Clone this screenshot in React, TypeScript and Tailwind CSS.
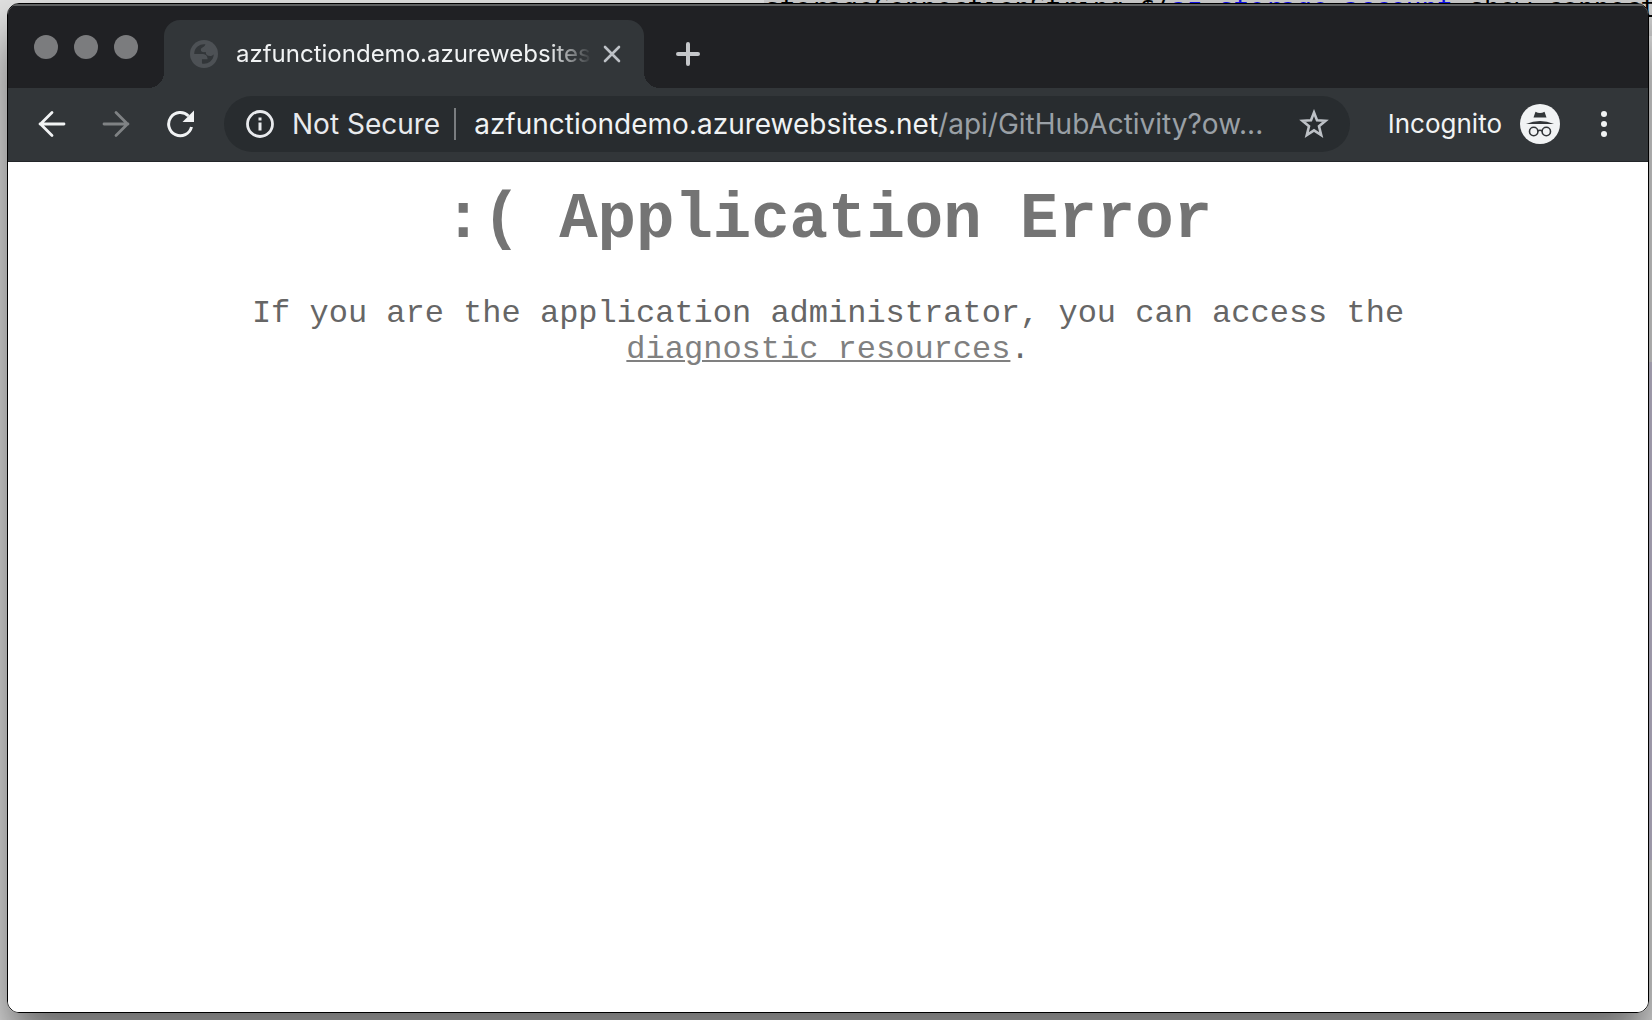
import React from "react";

const iconButton = "flex size-10 shrink-0 items-center justify-center rounded-full";

function Tab() {
  return (
    <div className="relative flex h-17 w-120 items-center rounded-t-2xl bg-[#323639] pr-3 pl-[26px]">
      <span className="absolute bottom-0 -left-4 size-4 bg-[radial-gradient(circle_at_0_0,transparent_16px,#323639_16px)]" />
      <span className="absolute -right-4 bottom-0 size-4 bg-[radial-gradient(circle_at_100%_0,transparent_16px,#323639_16px)]" />
      <svg viewBox="0 0 16 16" className="size-7 shrink-0" aria-hidden="true">
        <circle cx="8" cy="8" r="8" fill="#4d5155" />
        <path
          fill="#323639"
          d="M2.400 8H6.650C8.910 8 10.050 9 10.050 10.950H6.830V13.470A5.600 5.600 0 0 0 13.600 8.200C13.100 8.900 12.400 9.200 11.500 9.200C9.800 9.200 9 8.400 9 6.900C7 7.200 6.200 6.600 6.200 5.600C6.200 4.300 8.500 4.200 8.800 2.450A5.600 5.600 0 0 0 2.400 8z"
        />
      </svg>
      <span className="ml-[18px] min-w-0 flex-1 overflow-hidden mask-[linear-gradient(to_right,black_88%,transparent_100%)] text-2xl whitespace-nowrap text-[#f1f3f4]">
        azfunctiondemo.azurewebsites.net
      </span>
      <button aria-label="Close tab" className="flex size-10 items-center justify-center">
        <svg viewBox="0 0 18 18" className="size-[18px]" stroke="#bdc1c6" strokeWidth="2.600" strokeLinecap="round">
          <path d="M2 2 16 16M16 2 2 16" />
        </svg>
      </button>
    </div>
  );
}

function TitleBar() {
  return (
    <header className="flex h-[84px] items-end border-t-2 border-[#5f6162] bg-[#202124]">
      <div className="flex gap-4 pb-[29px] pl-[26px]">
        <button aria-label="Close" className="size-6 rounded-full bg-[#7b7c7e]" />
        <button aria-label="Minimize" className="size-6 rounded-full bg-[#7b7c7e]" />
        <button aria-label="Zoom" className="size-6 rounded-full bg-[#7b7c7e]" />
      </div>
      <div className="ml-[26px]">
        <Tab />
      </div>
      <button aria-label="New tab" className="mb-[14px] ml-6 flex size-10 items-center justify-center">
        <svg viewBox="0 0 24 24" className="size-6" stroke="#c5c7ca" strokeWidth="4" strokeLinecap="round">
          <path d="M12 2V22M2 12H22" />
        </svg>
      </button>
    </header>
  );
}

function Toolbar() {
  return (
    <nav className="flex h-[74px] items-center border-b border-[#232629] bg-[#323639] px-6 pb-0.5 text-[28px]">
      <button aria-label="Back" className={iconButton}>
        <svg viewBox="0 0 28 28" className="size-7" fill="none" stroke="#f1f3f4" strokeWidth="2.800" strokeLinecap="round">
          <path d="M26 14H2M14 2.500 2.500 14 14 25.500" />
        </svg>
      </button>
      <button aria-label="Forward" disabled className={`${iconButton} ml-6`}>
        <svg viewBox="0 0 28 28" className="size-7" fill="none" stroke="#7f8284" strokeWidth="2.800" strokeLinecap="round">
          <path d="M2 14H26M14 2.500 25.500 14 14 25.500" />
        </svg>
      </button>
      <button aria-label="Reload" className={`${iconButton} ml-6`}>
        <svg viewBox="0 0 28 28" className="size-7" fill="none">
          <path d="M25.500 17A11.600 11.600 0 1 1 22.500 6" stroke="#f1f3f4" strokeWidth="3" />
          <path d="M28 .5V12H16.500z" fill="#f1f3f4" />
        </svg>
      </button>
      <div className="ml-6 flex h-14 min-w-0 flex-1 items-center rounded-full bg-[#282c2f] pr-4 pl-[22px]">
        <svg viewBox="0 0 28 28" className="size-7 shrink-0" aria-hidden="true">
          <circle cx="14" cy="14" r="12.500" fill="none" stroke="#e8eaed" strokeWidth="2.800" />
          <path d="M12.500 7.500h3v3h-3zM12.500 12.500h3v8h-3z" fill="#e8eaed" />
        </svg>
        <span className="ml-[18px] shrink-0 text-[#e8eaed]">Not Secure</span>
        <span className="ml-[14px] h-8 w-0.5 shrink-0 bg-[#7a7d80]" />
        <span className="ml-[18px] min-w-0 flex-1 truncate text-[#9aa0a6]">
          <span className="text-[#f1f3f4]">azfunctiondemo.azurewebsites.net</span>
          /api/GitHubActivity?ow...
        </span>
        <button aria-label="Bookmark this page" className={iconButton}>
          <svg viewBox="0 0 30 30" className="size-[30px]" fill="none" stroke="#bdc1c6" strokeWidth="2.600">
            <path d="M15 3.500 18 11.200 26.500 11.800 20 17.200 22.200 26 15 21.300 7.800 26 10 17.200 3.500 11.800 12 11.200z" />
          </svg>
        </button>
      </div>
      <span className="ml-[38px] text-[26px] text-[#f1f3f4]">Incognito</span>
      <svg viewBox="0 0 40 40" className="ml-[18px] size-10 shrink-0" aria-label="Incognito profile">
        <circle cx="20" cy="20" r="20" fill="#f1f3f4" />
        <path d="M13.500 13.500 15.500 7.800Q20 10.200 24.500 7.800L26.500 13.500z" fill="#323639" />
        <path d="M6 20Q20 14 34 20z" fill="#323639" />
        <g fill="none" stroke="#323639" strokeWidth="1.600">
          <circle cx="13.700" cy="27.500" r="4.200" />
          <circle cx="26.300" cy="27.500" r="4.200" />
          <path d="M17.800 27Q20 25.500 22.200 27" />
        </g>
      </svg>
      <button aria-label="Menu" className="ml-6 flex size-10 items-center justify-center">
        <svg viewBox="0 0 6 26" className="h-[26px] w-1.5" fill="#f1f3f4">
          <circle cx="3" cy="3" r="3" />
          <circle cx="3" cy="13" r="3" />
          <circle cx="3" cy="23" r="3" />
        </svg>
      </button>
    </nav>
  );
}

function ErrorPage() {
  return (
    <main className="flex-1 bg-white px-4 pt-[22px] text-center font-['Courier_New','Liberation_Mono',monospace] text-[#666]">
      <h1 className="text-[64px] leading-[72px] font-bold text-[#747474]">:( Application Error</h1>
      <p className="mx-auto mt-10 max-w-[1200px] text-[32px] leading-9">
        If you are the application administrator, you can access the{" "}
        <a href="#diagnostics" className="text-[#808080] underline decoration-2 underline-offset-2">
          diagnostic resources
        </a>
        .
      </p>
    </main>
  );
}

export default function App() {
  return (
    <div className="relative flex min-h-screen flex-col overflow-hidden bg-[#e2e2e2] pt-[3px] pr-[3px] pb-[7px] pl-[7px] font-[Inter,sans-serif]">
      <div
        aria-hidden="true"
        className="absolute top-0 right-0 left-[764px] h-9 overflow-hidden bg-[#cfcfcf] font-['DejaVu_Sans_Mono',monospace] text-[26px] leading-4 whitespace-nowrap text-black"
      >
        storageConnectionString=$(<span className="text-[#1010f0]">az storage account</span> show-connection-string
      </div>
      <div aria-hidden="true" className="absolute top-[362px] right-0 bottom-40 w-1 bg-[#d0cbe0]" />
      <div className="relative flex flex-1 flex-col rounded-xl shadow-[0_30px_50px_rgba(0,0,0,0.55)]">
        <div className="flex flex-1 flex-col overflow-hidden rounded-xl border border-black bg-white">
          <TitleBar />
          <Toolbar />
          <ErrorPage />
        </div>
      </div>
    </div>
  );
}
